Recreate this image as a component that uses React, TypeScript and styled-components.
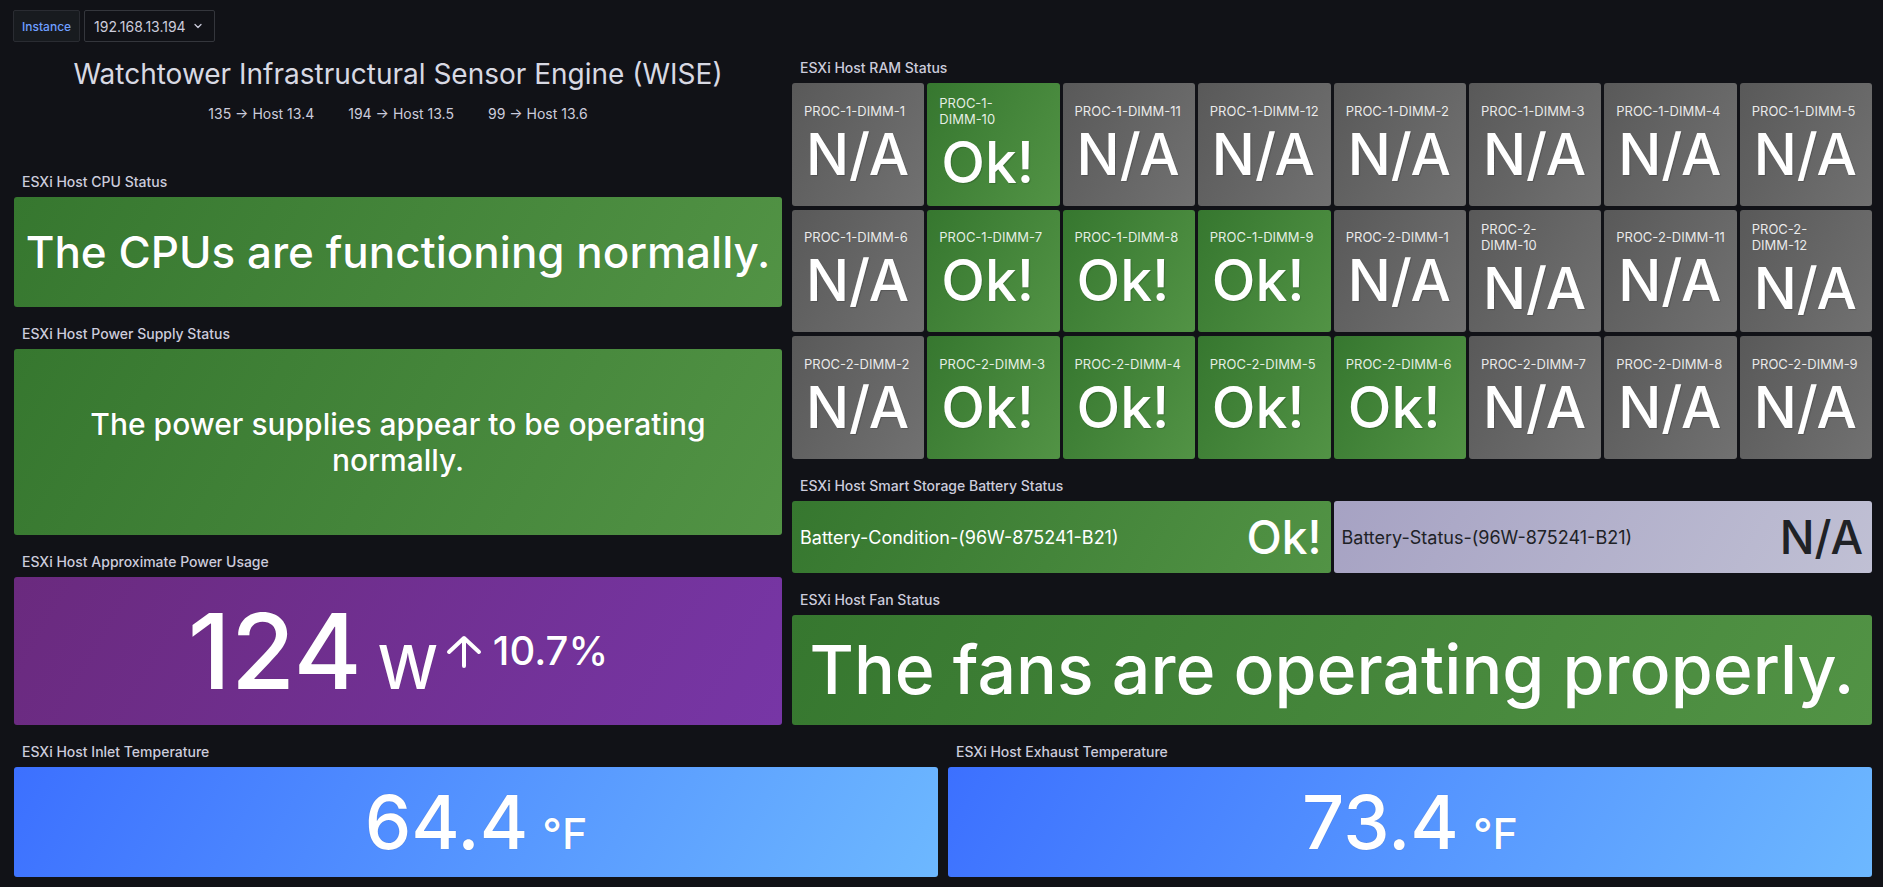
import React from "react";
import styled, { createGlobalStyle, css } from "styled-components";
import { ChevronDown } from "lucide-react";

const GlobalStyle = createGlobalStyle`
  html, body {
    margin: 0;
    padding: 0;
    background: #111217;
  }
  body {
    font-family: Inter, "Noto Sans", "Liberation Sans", sans-serif;
    color: #ccccdc;
    -webkit-font-smoothing: antialiased;
  }
  * {
    box-sizing: border-box;
  }
`;

type Tone = "green" | "purple" | "blue" | "gray" | "lavender";

const tones: Record<Tone, ReturnType<typeof css>> = {
  green: css`
    background: linear-gradient(120deg, #36772f, #529345);
    color: #ffffff;
  `,
  purple: css`
    background: linear-gradient(120deg, #6a2a7e, #7736a6);
    color: #ffffff;
  `,
  blue: css`
    background: linear-gradient(120deg, #3c70ff, #6db8ff);
    color: #ffffff;
  `,
  gray: css`
    background: linear-gradient(120deg, #595959, #717171);
    color: #ffffff;
  `,
  lavender: css`
    background: linear-gradient(120deg, #a6a2c3, #c0c0d4);
    color: #202226;
  `,
};

const Page = styled.div`
  width: 1883px;
  padding: 10px 10px 8px 13px;
`;

// Variables bar
const VarBar = styled.div`
  display: flex;
  gap: 4px;
  height: 32px;
`;

const VarLabel = styled.label`
  display: flex;
  align-items: center;
  padding: 0 8px;
  background: #181b1f;
  border: 1px solid #2a2c32;
  border-radius: 2px;
  color: #6e9fff;
  font-size: 12px;
  font-weight: 500;
`;

const VarSelect = styled.div`
  display: flex;
  align-items: center;
  gap: 6px;
  padding: 0 10px 0 9px;
  border: 1px solid #34363c;
  border-radius: 2px;
  color: #ccccdc;
  font-size: 14px;
`;

// Dashboard grid
const Grid = styled.div`
  margin-top: 9px;
  display: flex;
  flex-direction: column;
  gap: 8px;
`;

const TopArea = styled.div`
  display: grid;
  grid-template-columns: 770px 1fr;
  gap: 8px;
`;

const Column = styled.div`
  display: flex;
  flex-direction: column;
  gap: 8px;
`;

const BottomRow = styled.div`
  display: grid;
  grid-template-columns: 1fr 1fr;
  gap: 8px;
`;

const Panel = styled.section<{ $h: number }>`
  height: ${(p) => p.$h}px;
  display: flex;
  flex-direction: column;
  min-width: 0;
`;

const PanelHeader = styled.header`
  height: 32px;
  flex: none;
  display: flex;
  align-items: center;
  padding: 0 9px;
  font-size: 14px;
  font-weight: 500;
  color: #ccccdc;
  white-space: nowrap;
`;

const PanelBody = styled.div`
  flex: 1;
  min-height: 0;
  display: flex;
  padding: 0 1px 2px;
`;

// Text panel
const TextPanel = styled.div`
  display: flex;
  flex-direction: column;
  align-items: center;
  padding-top: 6px;
`;

const Heading = styled.h1`
  margin: 0;
  font-size: 28px;
  line-height: 34px;
  font-weight: 400;
  color: #d8d9e3;
`;

const HostMap = styled.div`
  margin-top: 13px;
  display: flex;
  gap: 34px;
  font-size: 14px;
  line-height: 20px;
  color: #ccccdc;
`;

// Stats
const Stat = styled.div<{ $tone: Tone }>`
  flex: 1;
  min-width: 0;
  border-radius: 3px;
  display: flex;
  align-items: center;
  justify-content: center;
  font-weight: 500;
  ${(p) => tones[p.$tone]}
`;

const Sentence = styled.div<{ $size: number }>`
  font-size: ${(p) => p.$size}px;
  line-height: 1.2;
  text-align: center;
  white-space: nowrap;
  text-shadow: 0 0 1px rgba(0, 0, 0, 0.25);
`;

const ValueRow = styled.div`
  display: flex;
  align-items: center;
  text-shadow: 0 0 1px rgba(0, 0, 0, 0.25);
`;

const NumberUnit = styled.div`
  display: flex;
  align-items: baseline;
`;

const BigNumber = styled.span<{ $size: number }>`
  font-size: ${(p) => p.$size}px;
  line-height: 1;
`;

const Unit = styled.span<{ $size: number; $gap: number }>`
  font-size: ${(p) => p.$size}px;
  line-height: 1;
  margin-left: ${(p) => p.$gap}px;
`;

const Change = styled.div`
  display: flex;
  align-items: center;
  gap: 11px;
  margin-left: 8px;
`;

const ChangeText = styled.span`
  font-size: 40px;
  line-height: 1;
`;

// RAM grid
const TileGrid = styled.div`
  flex: 1;
  display: grid;
  grid-template-columns: repeat(8, 1fr);
  grid-template-rows: repeat(3, 1fr);
  gap: 4px 3px;
`;

const Tile = styled.div<{ $tone: Tone }>`
  border-radius: 3px;
  display: flex;
  flex-direction: column;
  justify-content: center;
  padding: 0 12px 3px;
  ${(p) => tones[p.$tone]}
`;

const TileLabel = styled.div`
  font-size: 13px;
  line-height: 16px;
  color: rgba(255, 255, 255, 0.88);
  white-space: nowrap;
`;

const TileValue = styled.div`
  margin-top: 7px;
  font-size: 57px;
  line-height: 1;
  font-weight: 500;
  padding-left: 2px;
  text-shadow: 1px 1px 1px rgba(0, 0, 0, 0.18);
`;

// Battery row
const BatteryRow = styled.div`
  flex: 1;
  display: grid;
  grid-template-columns: 1fr 1fr;
  gap: 3px;
`;

const BatteryStat = styled.div<{ $tone: Tone }>`
  border-radius: 3px;
  display: flex;
  align-items: center;
  justify-content: space-between;
  padding: 0 9px 0 8px;
  ${(p) => tones[p.$tone]}
`;

const BatteryName = styled.span`
  font-size: 18px;
  white-space: nowrap;
`;

const BatteryValue = styled.span`
  font-size: 46px;
  line-height: 1;
  font-weight: 500;
`;

const ArrowUp = () => (
  <svg width="36" height="33" viewBox="0 0 36 33" fill="none">
    <path
      d="M18 31V4M3 17L18 3l15 14"
      stroke="#ffffff"
      strokeWidth="4"
      strokeLinecap="round"
      strokeLinejoin="round"
    />
  </svg>
);

type Dimm = { name: string; ok: boolean; wrap?: boolean };

const dimms: Dimm[] = [
  { name: "PROC-1-DIMM-1", ok: false },
  { name: "PROC-1-DIMM-10", ok: true, wrap: true },
  { name: "PROC-1-DIMM-11", ok: false },
  { name: "PROC-1-DIMM-12", ok: false },
  { name: "PROC-1-DIMM-2", ok: false },
  { name: "PROC-1-DIMM-3", ok: false },
  { name: "PROC-1-DIMM-4", ok: false },
  { name: "PROC-1-DIMM-5", ok: false },
  { name: "PROC-1-DIMM-6", ok: false },
  { name: "PROC-1-DIMM-7", ok: true },
  { name: "PROC-1-DIMM-8", ok: true },
  { name: "PROC-1-DIMM-9", ok: true },
  { name: "PROC-2-DIMM-1", ok: false },
  { name: "PROC-2-DIMM-10", ok: false, wrap: true },
  { name: "PROC-2-DIMM-11", ok: false },
  { name: "PROC-2-DIMM-12", ok: false, wrap: true },
  { name: "PROC-2-DIMM-2", ok: false },
  { name: "PROC-2-DIMM-3", ok: true },
  { name: "PROC-2-DIMM-4", ok: true },
  { name: "PROC-2-DIMM-5", ok: true },
  { name: "PROC-2-DIMM-6", ok: true },
  { name: "PROC-2-DIMM-7", ok: false },
  { name: "PROC-2-DIMM-8", ok: false },
  { name: "PROC-2-DIMM-9", ok: false },
];

function DimmLabel({ d }: { d: Dimm }) {
  if (!d.wrap) return <TileLabel>{d.name}</TileLabel>;
  const cut = d.name.indexOf("DIMM");
  return (
    <TileLabel>
      {d.name.slice(0, cut)}
      <br />
      {d.name.slice(cut)}
    </TileLabel>
  );
}

function Temperature({ title, value }: { title: string; value: string }) {
  return (
    <Panel $h={144}>
      <PanelHeader>{title}</PanelHeader>
      <PanelBody>
        <Stat $tone="blue">
          <ValueRow>
            <NumberUnit>
              <BigNumber $size={74}>{value}</BigNumber>
              <Unit $size={43} $gap={14}>°F</Unit>
            </NumberUnit>
          </ValueRow>
        </Stat>
      </PanelBody>
    </Panel>
  );
}

export default function App() {
  return (
    <>
      <GlobalStyle />
      <Page>
        <VarBar>
          <VarLabel>Instance</VarLabel>
          <VarSelect>
            192.168.13.194
            <ChevronDown size={12} strokeWidth={2.5} />
          </VarSelect>
        </VarBar>

        <Grid>
          <TopArea>
            <Column>
              <Panel $h={106}>
                <TextPanel>
                  <Heading>Watchtower Infrastructural Sensor Engine (WISE)</Heading>
                  <HostMap>
                    <span>135 → Host 13.4</span>
                    <span>194 → Host 13.5</span>
                    <span>99 → Host 13.6</span>
                  </HostMap>
                </TextPanel>
              </Panel>

              <Panel $h={144}>
                <PanelHeader>ESXi Host CPU Status</PanelHeader>
                <PanelBody>
                  <Stat $tone="green">
                    <Sentence $size={44}>The CPUs are functioning normally.</Sentence>
                  </Stat>
                </PanelBody>
              </Panel>

              <Panel $h={220}>
                <PanelHeader>ESXi Host Power Supply Status</PanelHeader>
                <PanelBody>
                  <Stat $tone="green">
                    <Sentence $size={30}>
                      The power supplies appear to be operating
                      <br />
                      normally.
                    </Sentence>
                  </Stat>
                </PanelBody>
              </Panel>

              <Panel $h={182}>
                <PanelHeader>ESXi Host Approximate Power Usage</PanelHeader>
                <PanelBody>
                  <Stat $tone="purple">
                    <ValueRow>
                      <NumberUnit>
                        <BigNumber $size={104}>124</BigNumber>
                        <Unit $size={60} $gap={16}>W</Unit>
                      </NumberUnit>
                      <Change>
                        <ArrowUp />
                        <ChangeText>10.7%</ChangeText>
                      </Change>
                    </ValueRow>
                  </Stat>
                </PanelBody>
              </Panel>
            </Column>

            <Column>
              <Panel $h={410}>
                <PanelHeader>ESXi Host RAM Status</PanelHeader>
                <PanelBody>
                  <TileGrid>
                    {dimms.map((d) => (
                      <Tile key={d.name} $tone={d.ok ? "green" : "gray"}>
                        <DimmLabel d={d} />
                        <TileValue>{d.ok ? "Ok!" : "N/A"}</TileValue>
                      </Tile>
                    ))}
                  </TileGrid>
                </PanelBody>
              </Panel>

              <Panel $h={106}>
                <PanelHeader>ESXi Host Smart Storage Battery Status</PanelHeader>
                <PanelBody>
                  <BatteryRow>
                    <BatteryStat $tone="green">
                      <BatteryName>Battery-Condition-(96W-875241-B21)</BatteryName>
                      <BatteryValue>Ok!</BatteryValue>
                    </BatteryStat>
                    <BatteryStat $tone="lavender">
                      <BatteryName>Battery-Status-(96W-875241-B21)</BatteryName>
                      <BatteryValue>N/A</BatteryValue>
                    </BatteryStat>
                  </BatteryRow>
                </PanelBody>
              </Panel>

              <Panel $h={144}>
                <PanelHeader>ESXi Host Fan Status</PanelHeader>
                <PanelBody>
                  <Stat $tone="green">
                    <Sentence $size={68}>The fans are operating properly.</Sentence>
                  </Stat>
                </PanelBody>
              </Panel>
            </Column>
          </TopArea>

          <BottomRow>
            <Temperature title="ESXi Host Inlet Temperature" value="64.4" />
            <Temperature title="ESXi Host Exhaust Temperature" value="73.4" />
          </BottomRow>
        </Grid>
      </Page>
    </>
  );
}
